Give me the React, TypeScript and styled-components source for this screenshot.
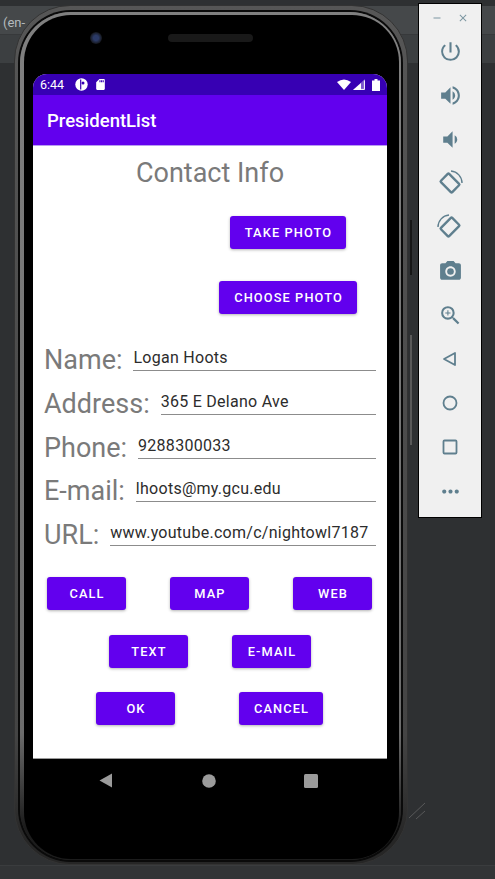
import React from 'react';
import styled, { createGlobalStyle } from 'styled-components';
import { MdPowerSettingsNew, MdVolumeUp, MdVolumeDown, MdPhotoCamera, MdZoomIn, MdMoreHoriz, MdSdCard, MdClose, MdRemove } from 'react-icons/md';

const GlobalStyle = createGlobalStyle`
  html, body { margin: 0; padding: 0; background: #2f3032; }
  body { font-family: Roboto, "Liberation Sans", sans-serif; }
`;

const Desktop = styled.div`
  position: relative;
  width: 495px;
  height: 879px;
  overflow: hidden;
  background: #2e3032;
`;

const IdeHeader = styled.div`
  margin-top: 6px;
  background: #3c3f41;
`;

const IdeTabs = styled.div`
  height: 29px;
  padding: 9px 3px 0;
  box-sizing: border-box;
  background: #45484a;
  border-bottom: 1px solid #37393b;
  color: #b4babd;
  font-size: 13px;
  line-height: 15px;
`;

const IdeTools = styled.div`
  height: 28px;
`;

const IdeFooter = styled.div`
  position: absolute;
  left: 0;
  right: 0;
  bottom: 0;
  height: 13px;
  background: #323436;
  border-top: 1px solid #3a3c3e;
`;

const PhoneBody = styled.div`
  position: absolute;
  left: 14px;
  top: 5px;
  width: 394px;
  height: 860px;
  box-sizing: border-box;
  padding: 68px 0 0 18px;
  border-radius: 56px;
  background: linear-gradient(to bottom, #565656, #444 85%, #262626 97%);
  border: 1px solid #333;

  &::before {
    content: '';
    position: absolute;
    inset: 6px 6px 4px 5px;
    border-radius: 51px;
    background: linear-gradient(to bottom, #808080, #6c6c6c 85%, #1c1c1c 96%);
    box-shadow: 0 0 0 2px #0a0a0a;
  }

  &::after {
    content: '';
    position: absolute;
    inset: 9px 8px 5px 9px;
    border-radius: 47px;
    background: #000;
  }
`;

const SideButton = styled.div<{ $top: number; $height: number; $color: string }>`
  position: absolute;
  left: 410px;
  top: ${({ $top }) => $top}px;
  width: 2px;
  height: ${({ $height }) => $height}px;
  background: ${({ $color }) => $color};
`;

const ResizeMark = styled.svg`
  position: absolute;
  left: 408px;
  top: 802px;
`;

const Camera = styled.div`
  position: absolute;
  z-index: 1;
  left: 75px;
  top: 26px;
  width: 12px;
  height: 12px;
  border-radius: 50%;
  background: radial-gradient(circle, #2b3a66 0 30%, #15171c 70%);
`;

const Speaker = styled.div`
  position: absolute;
  z-index: 1;
  left: 153px;
  top: 28px;
  width: 85px;
  height: 8px;
  border-radius: 4px;
  background: #191919;
`;

const Screen = styled.div`
  position: relative;
  z-index: 1;
  width: 354px;
  height: 685px;
  background: #fff;
  border-radius: 14px 14px 0 0;
  overflow: hidden;
  border-bottom: 1px solid #9a9a9a;
  box-sizing: border-box;
`;

const StatusBar = styled.div`
  height: 21px;
  display: flex;
  align-items: center;
  padding: 0 7px;
  background: #3700b3;
  color: #fff;
  font-size: 12.5px;
`;

const StatusTime = styled.span`
  margin-right: 11px;
`;

const SignalGroup = styled.div`
  margin-left: auto;
  display: flex;
  align-items: center;
  gap: 2px;
`;

const Battery = styled.svg`
  margin-left: 5px;
`;

const AppBar = styled.div`
  height: 51px;
  display: flex;
  align-items: center;
  padding: 2px 0 0 14px;
  background: #6200ee;
  color: #fff;
  font-size: 18.5px;
  font-weight: 500;
  border-bottom: 1px solid #b89cf0;
  box-sizing: border-box;
`;

const Content = styled.div`
  display: flex;
  flex-direction: column;
`;

const Title = styled.div`
  margin-top: 11px;
  text-align: center;
  color: #7a7a7a;
  font-size: 27px;
  line-height: 32px;
`;

const PhotoRow = styled.div<{ $left: number; $top: number }>`
  display: flex;
  margin-left: ${({ $left }) => $left}px;
  margin-top: ${({ $top }) => $top}px;
`;

const Button = styled.button<{ $width: number }>`
  width: ${({ $width }) => $width}px;
  height: 33px;
  padding: 0 0 0 1px;
  border: none;
  border-radius: 3px;
  background: #6200ee;
  color: #fff;
  font-family: Roboto, sans-serif;
  font-size: 12.8px;
  font-weight: 500;
  letter-spacing: 1.1px;
  box-shadow: 0 1px 3px rgba(0, 0, 0, 0.3);
`;

const Fields = styled.div`
  display: flex;
  flex-direction: column;
  margin-top: 30px;
  padding: 0 11px;
  gap: 10.75px;
`;

const FieldRow = styled.div`
  display: flex;
  align-items: flex-end;
  height: 33px;
`;

const FieldLabel = styled.span`
  color: #7a7a7a;
  font-size: 27px;
  line-height: 32px;
  margin: 0 11px 1px 0;
  white-space: nowrap;
`;

const FieldValue = styled.div`
  flex: 1;
  height: 26px;
  margin-bottom: 6px;
  box-sizing: border-box;
  border-bottom: 1px solid #8c8c8c;
  color: #2c2c2c;
  font-size: 16px;
  line-height: 26px;
  letter-spacing: 0.27px;
  white-space: nowrap;
`;

const ButtonRow = styled.div<{ $left: number; $right: number; $top: number }>`
  display: flex;
  justify-content: space-between;
  padding: 0 ${({ $right }) => $right}px 0 ${({ $left }) => $left}px;
  margin-top: ${({ $top }) => $top}px;
`;

const NavBar = styled.div`
  position: absolute;
  z-index: 1;
  left: 84px;
  top: 767px;
  width: 219px;
  height: 15px;
  display: flex;
  justify-content: space-between;
  align-items: center;
`;

const Toolbar = styled.div`
  position: absolute;
  left: 418px;
  top: 3px;
  width: 64px;
  height: 515px;
  box-sizing: border-box;
  border: 1px solid #000;
  background: #f0f0f0;
  color: #5f7f8e;
  display: flex;
  flex-direction: column;
  align-items: center;
`;

const WindowControls = styled.div`
  display: flex;
  gap: 14px;
  height: 25px;
  padding-top: 3px;
  box-sizing: border-box;
  align-items: center;
  color: #7d97a2;
  font-size: 12px;
`;

const ToolButton = styled.div`
  width: 44px;
  height: 44px;
  flex: none;
  display: flex;
  align-items: center;
  justify-content: center;
  font-size: 25px;
`;

const RotateIcon = ({ flip }: { flip?: boolean }) => (
  <svg width="26" height="26" viewBox="0 0 26 26" fill="none" stroke="currentColor" strokeWidth="2.4">
    <rect x="5" y="7.2" width="16" height="11.6" rx="1" transform={flip ? 'rotate(-45 13 13)' : 'rotate(45 13 13)'} />
    {flip ? <path d="M1 13 A12 12 0 0 1 12 1" strokeWidth="1.4" /> : <path d="M14 1 A12 12 0 0 1 25 13" strokeWidth="1.4" />}
  </svg>
);

const DataSaver = () => (
  <svg width="13" height="13" viewBox="0 0 13 13">
    <circle cx="6.5" cy="6.5" r="6.2" fill="#fff" />
    <path d="M5.7 1.5 V11.5" stroke="#3700b3" strokeWidth="1.2" />
    <circle cx="8" cy="5" r="1.5" fill="#3700b3" />
  </svg>
);

const fields = [
  { label: 'Name:', value: 'Logan Hoots' },
  { label: 'Address:', value: '365 E Delano Ave' },
  { label: 'Phone:', value: '9288300033' },
  { label: 'E-mail:', value: 'lhoots@my.gcu.edu' },
  { label: 'URL:', value: 'www.youtube.com/c/nightowl7187' },
];

export default function App() {
  return (
    <Desktop>
      <GlobalStyle />
      <IdeHeader>
        <IdeTabs>(en-</IdeTabs>
        <IdeTools />
      </IdeHeader>
      <IdeFooter />
      <SideButton $top={220} $height={55} $color="#151515" />
      <SideButton $top={335} $height={110} $color="#5a5a5a" />
      <ResizeMark width="18" height="18" viewBox="0 0 18 18" fill="none" stroke="#6a6a6a" strokeWidth="0.7">
        <path d="M1 16 L17 1" />
        <path d="M8 17 L17 9" />
      </ResizeMark>
      <PhoneBody>
        <Camera />
        <Speaker />
        <Screen>
          <StatusBar>
            <StatusTime>6:44</StatusTime>
            <DataSaver />
            <MdSdCard size={13} style={{ marginLeft: 6 }} />
            <SignalGroup>
              <svg width="14" height="11" viewBox="0 0 14 11"><path d="M0 3 Q7 -2 14 3 L7 11 Z" fill="#fff" /></svg>
              <svg width="12" height="11" viewBox="0 0 12 11">
                <path d="M12 0 V11 H0 Z" fill="#fff" fillOpacity="0.35" />
                <path d="M8 4 V11 H0 L8 4 Z" fill="#fff" />
                <path d="M11.4 1.4 V10.4 H8" fill="none" stroke="#fff" strokeWidth="1" />
              </svg>
              <Battery width="8" height="12" viewBox="0 0 8 12"><path d="M2.5 0 H5.5 V1.5 H8 V12 H0 V1.5 H2.5 Z" fill="#fff" /></Battery>
            </SignalGroup>
          </StatusBar>
          <AppBar>PresidentList</AppBar>
          <Content>
            <Title>Contact Info</Title>
            <PhotoRow $left={197} $top={27}><Button $width={116}>TAKE PHOTO</Button></PhotoRow>
            <PhotoRow $left={186} $top={32}><Button $width={138}>CHOOSE PHOTO</Button></PhotoRow>
            <Fields>
              {fields.map((field) => (
                <FieldRow key={field.label}>
                  <FieldLabel>{field.label}</FieldLabel>
                  <FieldValue>{field.value}</FieldValue>
                </FieldRow>
              ))}
            </Fields>
            <ButtonRow $left={14} $right={15} $top={25}>
              <Button $width={79}>CALL</Button>
              <Button $width={79}>MAP</Button>
              <Button $width={79}>WEB</Button>
            </ButtonRow>
            <ButtonRow $left={76} $right={76} $top={25}>
              <Button $width={79}>TEXT</Button>
              <Button $width={79}>E-MAIL</Button>
            </ButtonRow>
            <ButtonRow $left={63} $right={64} $top={24}>
              <Button $width={79}>OK</Button>
              <Button $width={84}>CANCEL</Button>
            </ButtonRow>
          </Content>
        </Screen>
        <NavBar>
          <svg width="14" height="15" viewBox="0 0 14 15"><path d="M0.5 7.5 L13 0.5 V14.5 Z" fill="#9b9b9b" /></svg>
          <svg width="14" height="14" viewBox="0 0 14 14"><circle cx="7" cy="7" r="6.8" fill="#9b9b9b" /></svg>
          <svg width="14" height="14" viewBox="0 0 14 14"><rect width="14" height="14" rx="1.5" fill="#9b9b9b" /></svg>
        </NavBar>
      </PhoneBody>
      <Toolbar>
        <WindowControls><MdRemove /><MdClose /></WindowControls>
        <ToolButton><MdPowerSettingsNew /></ToolButton>
        <ToolButton><MdVolumeUp /></ToolButton>
        <ToolButton><MdVolumeDown /></ToolButton>
        <ToolButton><RotateIcon /></ToolButton>
        <ToolButton><RotateIcon flip /></ToolButton>
        <ToolButton><MdPhotoCamera /></ToolButton>
        <ToolButton><MdZoomIn /></ToolButton>
        <ToolButton>
          <svg width="22" height="22" viewBox="0 0 22 22" fill="none" stroke="currentColor" strokeWidth="1.8"><path d="M16 5 V17 L5 11 Z" strokeLinejoin="round" /></svg>
        </ToolButton>
        <ToolButton>
          <svg width="22" height="22" viewBox="0 0 22 22" fill="none" stroke="currentColor" strokeWidth="1.8"><circle cx="11" cy="11" r="6.5" /></svg>
        </ToolButton>
        <ToolButton>
          <svg width="22" height="22" viewBox="0 0 22 22" fill="none" stroke="currentColor" strokeWidth="1.8"><rect x="4.5" y="4.5" width="13" height="13" rx="1" /></svg>
        </ToolButton>
        <ToolButton><MdMoreHoriz /></ToolButton>
      </Toolbar>
    </Desktop>
  );
}
